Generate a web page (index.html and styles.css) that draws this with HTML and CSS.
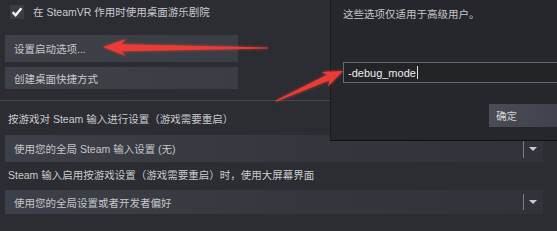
FILE: index.html
```html
<!DOCTYPE html>
<html lang="zh-CN">
<head>
    <meta charset="UTF-8">
    <title>启动选项</title>
    <link rel="stylesheet" href="styles.css">
</head>
<body>
    <div class="page">
        <div class="check-row">
            <span class="checkbox">
                <svg width="14" height="14" viewBox="0 0 14 14"><path d="M2.6 7.2 L5.6 10.2 L11.4 3.2" fill="none" stroke="#f4f4f4" stroke-width="2.4"/></svg>
            </span>
            <span class="check-label">在 SteamVR 作用时使用桌面游乐剧院</span>
        </div>

        <div class="btn btn-tall">设置启动选项...</div>
        <div class="btn btn-short">创建桌面快捷方式</div>

        <div class="divider"></div>

        <div class="label label-first">按游戏对 Steam 输入进行设置（游戏需要重启）</div>
        <div class="dropdown dropdown-first">
            <span>使用您的全局 Steam 输入设置 (无)</span>
            <span class="dd-arrow"></span>
        </div>

        <div class="label label-second">Steam 输入启用按游戏设置（游戏需要重启）时，使用大屏幕界面</div>
        <div class="dropdown dropdown-second">
            <span>使用您的全局设置或者开发者偏好</span>
            <span class="dd-arrow"></span>
        </div>
    </div>

    <!-- 启动选项对话框 -->
    <div class="dialog">
        <div class="dialog-text">这些选项仅适用于高级用户。</div>
        <div class="dialog-input">-debug_mode<span class="caret"></span></div>
        <div class="dialog-ok">确定</div>
    </div>

    <!-- 红色标注箭头 -->
    <svg class="marks" width="557" height="231" viewBox="0 0 557 231">
        <polygon points="103,47 126,39 121,44.2 268,47.4 268,48.6 121,51.2 126,56" />
        <polygon points="343,71 321.4,71.9 327.2,74.8 275.7,100.4 276.3,101.6 329.6,80.2 328,86.5" />
    </svg>
</body>
</html>
```

FILE: styles.css
```css
html, body {
    margin: 0;
    padding: 0;
}
body {
    width: 557px;
    height: 231px;
    overflow: hidden;
    position: relative;
    background: #2b2d32;
    font-family: "Liberation Sans", "Noto Sans CJK SC", sans-serif;
    font-size: 10.5px;
    color: #c4c6ca;
}
.page {
    display: flex;
    flex-direction: column;
}
.check-row {
    display: flex;
    align-items: center;
    gap: 9px;
    padding: 5px 0 0 10px;
    height: 14px;
}
.checkbox {
    width: 14px;
    height: 14px;
    background: #3a3c42;
    display: flex;
    align-items: center;
    justify-content: center;
}
.checkbox svg {
    flex: none;
}
.check-label {
    line-height: 14px;
    color: #cacccf;
}
.btn {
    margin-left: 5px;
    width: 233px;
    padding-left: 9px;
    box-sizing: border-box;
    display: flex;
    align-items: center;
    background: linear-gradient(to right, #3e4148, #3a3d44);
    color: #c8cacd;
}
.btn-tall {
    margin-top: 16px;
    height: 27px;
}
.btn-short {
    margin-top: 5px;
    height: 22px;
}
.divider {
    margin-top: 11px;
    height: 1px;
    background: #45474d;
}
.label {
    margin-left: 8px;
    line-height: 14px;
    color: #cacccf;
}
.label-first {
    margin-top: 11px;
}
.label-second {
    margin-top: 6px;
}
.dropdown {
    margin-left: 5px;
    width: 538px;
    box-sizing: border-box;
    padding-left: 9px;
    display: flex;
    align-items: center;
    position: relative;
    background: linear-gradient(to right, #3d4048, #33363c 60%, #30333a);
    color: #c4c6ca;
}
.dropdown-first {
    margin-top: 9px;
    height: 27px;
}
.dropdown-second {
    margin-top: 8px;
    height: 24px;
}
.dd-arrow {
    position: absolute;
    right: 19px;
    top: 4px;
    bottom: 4px;
    width: 1px;
    background: #7d8085;
}
.dd-arrow::after {
    content: "";
    position: absolute;
    left: 6px;
    top: 50%;
    margin-top: -2px;
    border-left: 4px solid transparent;
    border-right: 4px solid transparent;
    border-top: 4px solid #c9cbce;
}
.dialog {
    position: absolute;
    left: 330px;
    top: 0;
    width: 227px;
    height: 141px;
    background: #25272c;
    border-left: 1px solid #1b1c1f;
    border-bottom: 1px solid #0e0f11;
    box-sizing: border-box;
}
.dialog-text {
    position: absolute;
    left: 12px;
    top: 7px;
    line-height: 14px;
    color: #c6c8cb;
}
.dialog-input {
    position: absolute;
    left: 12px;
    top: 62px;
    width: 230px;
    height: 21px;
    box-sizing: border-box;
    border: 1px solid #65686d;
    background: #222428;
    padding-left: 4px;
    display: flex;
    align-items: center;
    color: #eceded;
    font-size: 11px;
}
.caret {
    width: 1px;
    height: 13px;
    margin-left: 1px;
    background: #e0e0e0;
}
.dialog-ok {
    position: absolute;
    left: 158px;
    top: 104px;
    width: 80px;
    height: 23px;
    padding-left: 7px;
    box-sizing: border-box;
    display: flex;
    align-items: center;
    background: linear-gradient(to right, #4a4d55, #3d4048);
    color: #d2d4d7;
}
.marks {
    position: absolute;
    left: 0;
    top: 0;
    pointer-events: none;
}
.marks polygon {
    fill: #ec3b34;
    filter: drop-shadow(0 0 1.5px rgba(255, 70, 60, 0.7));
}
```
